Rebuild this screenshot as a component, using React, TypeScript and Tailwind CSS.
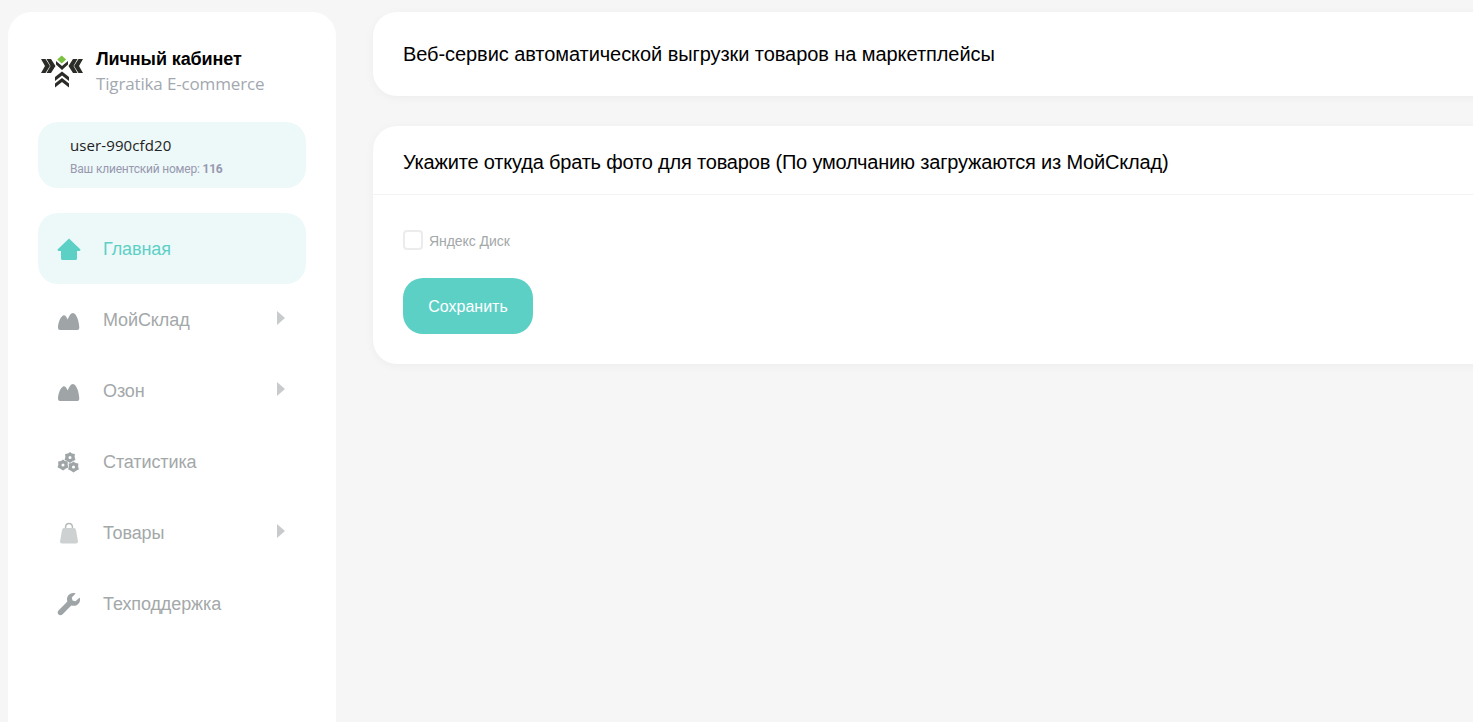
import React from "react";

const Arrow = () => (
  <svg width="8" height="14" viewBox="0 0 8 14" className="ml-auto mr-[21px] -mt-[3px]">
    <path d="M0 0 L8 7 L0 14 Z" fill="#c8cbcc" />
  </svg>
);

const Home = () => (
  <svg width="24" height="24" viewBox="0 0 24 24">
    <path d="M12 1.5 L23.5 12.5 Q23.5 14 22 14 L20 14 L20 21.5 Q20 23 18.5 23 L5.5 23 Q4 23 4 21.5 L4 14 L2 14 Q0.5 14 0.5 12.5 Z" fill="#5dd0c6" />
  </svg>
);

const Hills = () => (
  <svg width="24" height="24" viewBox="0 0 24 24">
    <path d="M1 20 C1 15 3 9.5 6 7.5 C8 6.5 9.5 9 10.8 11.5 C11.8 8.5 13.5 5 16 5 C19.5 5 22.3 14 22.3 20 Q22.3 22 20.3 22 L3 22 Q1 22 1 20 Z" fill="#9fa5a7" />
  </svg>
);

const gear = "M0 -5.6 L2 -4 L4.9 -3.4 L4.6 -0.6 L5.4 2.4 L3 3.6 L0 5.6 L-3 3.6 L-5.4 2.4 L-4.6 -0.6 L-4.9 -3.4 L-2 -4 Z M0 -1.5 A1.5 1.5 0 1 0 0 1.5 A1.5 1.5 0 1 0 0 -1.5 Z";

const Gears = () => (
  <svg width="24" height="24" viewBox="0 0 24 24" fill="#9fa5a7">
    <path d={gear} fillRule="evenodd" transform="translate(13 7.5)" />
    <path d={gear} fillRule="evenodd" transform="translate(6 15)" />
    <path d={gear} fillRule="evenodd" transform="translate(16.5 17)" />
  </svg>
);

const Bag = () => (
  <svg width="24" height="24" viewBox="0 0 24 24">
    <path d="M8.5 7 Q8.5 2.5 12 2.5 Q15.5 2.5 15.5 7" fill="none" stroke="#b5babb" strokeWidth="1.5" />
    <path d="M7 7 L17 7 Q18.5 7 19 9 L21 20.5 Q21 22.5 19 22.5 L5 22.5 Q3 22.5 3 20.5 L5 9 Q5.5 7 7 7 Z" fill="#cdd1d2" />
  </svg>
);

const Wrench = () => (
  <svg width="24" height="24" viewBox="0 0 24 24">
    <path d="M22.7 5.5 L18.5 9.2 L15.5 8.5 L14.8 5.5 L18.6 1.4 C15.5 0.4 12 1.6 10.6 4.5 C9.8 6.2 9.8 8 10.4 9.6 L1.5 18.6 C0.4 19.7 0.4 21.3 1.5 22.4 C2.6 23.5 4.3 23.5 5.4 22.4 L14.3 13.4 C16 14.1 18 14 19.7 13.2 C22.4 11.8 23.7 8.5 22.7 5.5 Z" fill="#9fa5a7" />
  </svg>
);

const Logo = () => (
  <svg width="44" height="35" viewBox="0 0 44 35">
    <path d="M21.7 1.5 L26.2 5.5 L21.7 9.5 L17.2 5.5 Z" fill="#7cc242" />
    <g fill="#2b2b27">
      <path d="M1 5 L5.5 5 L10 12 L5.5 19 L1 19 L5 12 Z" />
      <path d="M6.5 5 L11 5 L15.5 12 L11 19 L6.5 19 L10.5 12 Z" />
      <path d="M43 5 L38.5 5 L34 12 L38.5 19 L43 19 L39 12 Z" />
      <path d="M37.5 5 L33 5 L28.5 12 L33 19 L37.5 19 L33.5 12 Z" />
      <path d="M16 7 L22 12 L28 7 L28 10.5 L22 16 L16 10.5 Z" />
      <path d="M22 17.5 L29 23 L29 27 L22 21.5 L15 27 L15 23 Z" />
      <path d="M22 24 L29 29.5 L29 33.5 L22 28 L15 33.5 L15 29.5 Z" />
    </g>
  </svg>
);

const items = [
  { label: "МойСклад", icon: <Hills />, arrow: true },
  { label: "Озон", icon: <Hills />, arrow: true },
  { label: "Статистика", icon: <Gears />, arrow: false },
  { label: "Товары", icon: <Bag />, arrow: true },
  { label: "Техподдержка", icon: <Wrench />, arrow: false },
];

export default function App() {
  return (
    <div className="h-[722px] w-[1473px] overflow-hidden bg-[#f6f6f6] flex items-start font-['Liberation_Sans',sans-serif]">
      <aside className="ml-2 mt-3 w-[328px] h-[720px] shrink-0 bg-white rounded-t-[24px] px-[30px] pt-[36px]">
        <div className="flex items-center h-[46px] ml-[2px]">
          <Logo />
          <div className="ml-3 pt-[1px]">
            <div className="text-[18px] leading-[24px] font-bold text-black tracking-[-0.1px] whitespace-nowrap">Личный кабинет</div>
            <div className="text-[17px] leading-[25px] font-medium text-[#a3a8b0] font-['Open_Sans',sans-serif] tracking-[-0.15px] whitespace-nowrap">Tigratika E-commerce</div>
          </div>
        </div>
        <div className="mt-[28px] h-[66px] rounded-[20px] bg-[#edf8f8] pl-8 pt-[12px]">
          <div className="text-[15px] leading-[22px] text-[#222] font-['Open_Sans',sans-serif] tracking-[0.1px]">user-990cfd20</div>
          <div className="text-[12px] leading-[18px] mt-[4px] text-[#9898b0] font-['Roboto',sans-serif] tracking-[-0.2px]">
            Ваш клиентский номер: <b>116</b>
          </div>
        </div>
        <nav className="mt-[25px] flex flex-col">
          <div className="h-[71px] rounded-[20px] bg-[#edf9f9] flex items-center pl-[19px]">
            <Home />
            <span className="ml-[22px] text-[18px] tracking-[-0.1px] text-[#5dd0c6] mt-[1px]">Главная</span>
          </div>
          {items.map((it) => (
            <div key={it.label} className="h-[71px] flex items-center pl-[19px]">
              {it.icon}
              <span className="ml-[22px] text-[18px] tracking-[-0.1px] text-[#a3a8a9] mt-[1px]">{it.label}</span>
              {it.arrow && <Arrow />}
            </div>
          ))}
        </nav>
      </aside>
      <main className="ml-[37px] mt-3 w-[1200px] shrink-0 flex flex-col gap-[30px]">
        <section className="h-[84px] bg-white rounded-[24px] shadow-[0_2px_10px_rgba(0,0,0,0.04)] flex items-center px-[30px]">
          <h1 className="text-[20px] text-black tracking-[-0.07px]">Веб-сервис автоматической выгрузки товаров на маркетплейсы</h1>
        </section>
        <section className="h-[238px] bg-white rounded-[24px] shadow-[0_2px_10px_rgba(0,0,0,0.04)]">
          <div className="h-[69px] border-b border-[#f3f3f3] flex items-center px-[30px]">
            <h2 className="text-[20px] text-black tracking-[-0.19px] mt-[4px]">Укажите откуда брать фото для товаров (По умолчанию загружаются из МойСклад)</h2>
          </div>
          <div className="px-[30px] pt-[35px]">
            <label className="flex items-center h-[20px]">
              <span className="w-[20px] h-[20px] rounded-[4px] border-2 border-[#ececec] bg-white" />
              <span className="ml-[6px] text-[14px] tracking-[-0.05px] text-[#a3a8a9] mt-[2px]">Яндекс Диск</span>
            </label>
            <button className="mt-[28px] w-[130px] h-[56px] rounded-[20px] bg-[#5dd0c6] text-white text-[16px] pt-[1px]">Сохранить</button>
          </div>
        </section>
      </main>
    </div>
  );
}
